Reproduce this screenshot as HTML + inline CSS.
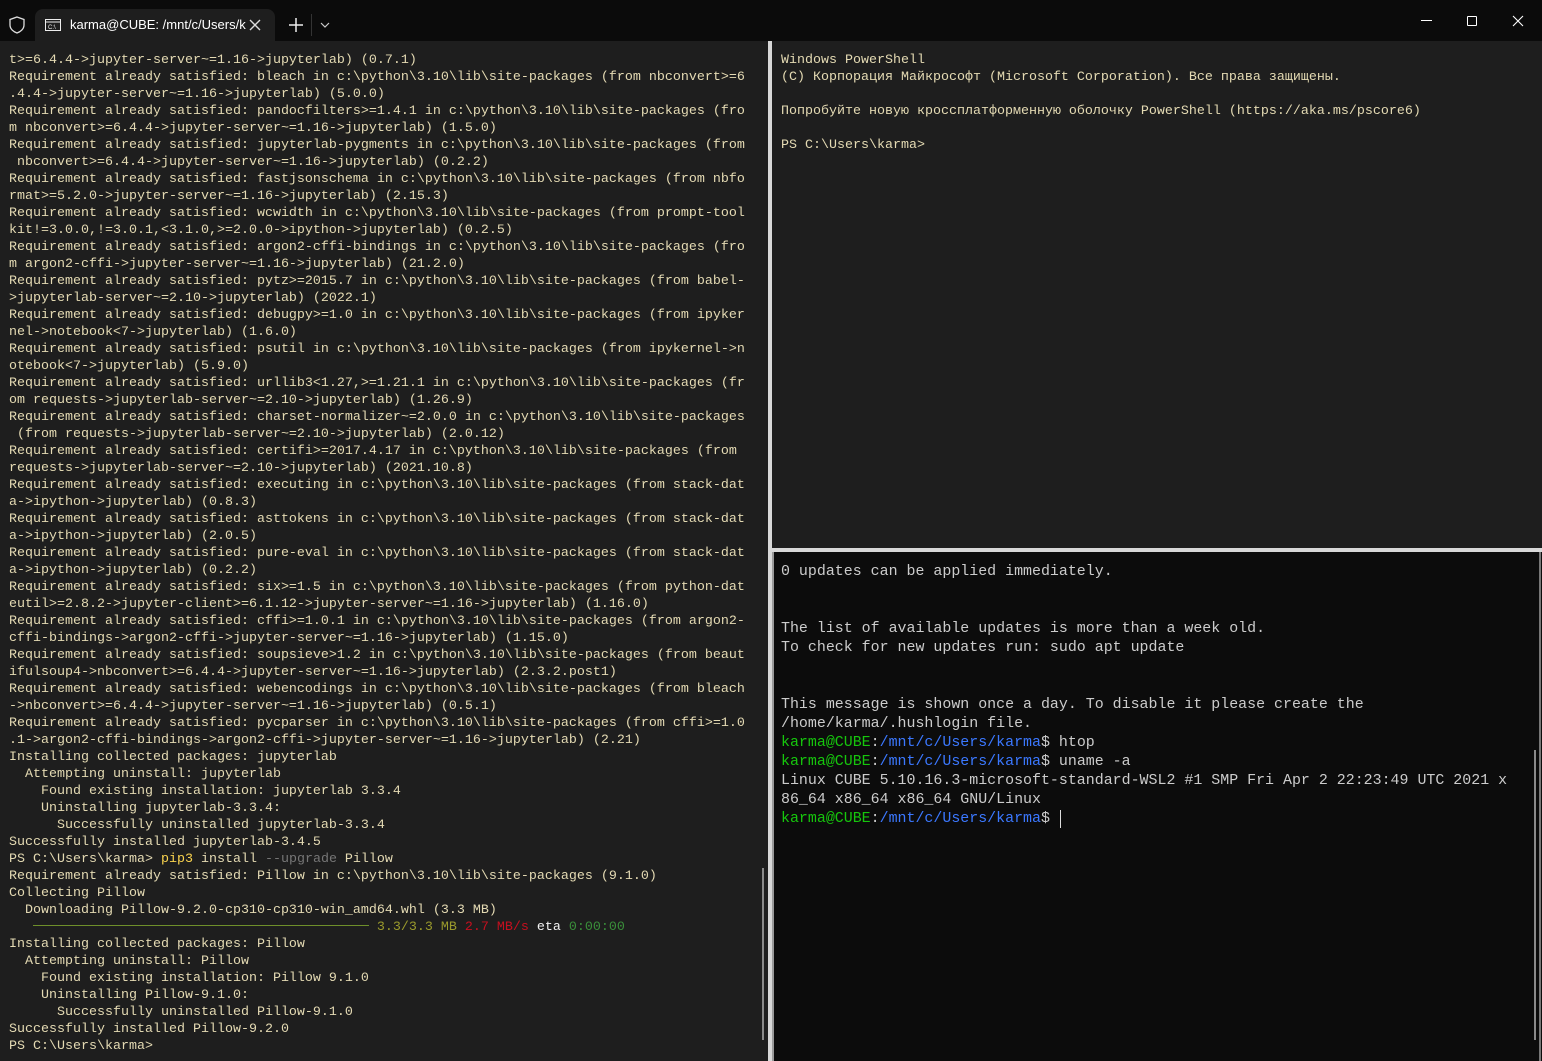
<!DOCTYPE html>
<html><head><meta charset="utf-8"><style>
*{margin:0;padding:0;box-sizing:border-box}
body{width:1542px;height:1061px;background:#0b0b0b;position:relative;overflow:hidden;font-family:"Liberation Mono","DejaVu Sans Mono",monospace}
.tb{position:absolute;left:0;top:0;width:1542px;height:41px;background:#0b0b0b}
.tab{position:absolute;left:35px;top:9px;width:240px;height:32px;background:#1e1e1e;border-radius:8px 8px 0 0}
.tab .t{position:absolute;left:35px;top:8px;font:13px "Liberation Sans",sans-serif;color:#fff}
pre{position:absolute;white-space:pre;font-family:"Liberation Mono",monospace}
.l{left:9px;top:51.5px;font-size:13.33px;line-height:17px;color:#e4dab3}
#left{position:absolute;left:0;top:41px;width:768px;height:1020px;background:#1e1e1e}
#rt{position:absolute;left:772px;top:41px;width:770px;height:507px;background:#1e1e1e}
#rb{position:absolute;left:772px;top:552px;width:770px;height:509px;background:#0c0c0c}
.div{position:absolute;background:#cfcfcf}
.rb{left:781px;top:562.5px;font-size:14.95px;line-height:19px;color:#cccccc}
.g{color:#16c60c}.b{color:#3b78ff}
.y{color:#f9d34e}.gr{color:#767676}.o{color:#9a9a2c}.r{color:#c50f1f}.gg{color:#3a8f3a}.w{color:#f2f2f2}
</style></head><body>
<div class="tb">
<svg style="position:absolute;left:9px;top:16px" width="16" height="18" viewBox="0 0 16 18"><path d="M8 1 L15 3.5 V9 C15 13 11.5 15.8 8 17 C4.5 15.8 1 13 1 9 V3.5 Z" fill="none" stroke="#ddd" stroke-width="1.3"/></svg>
<div class="tab">
<svg style="position:absolute;left:10px;top:10px" width="16" height="12" viewBox="0 0 16 12"><rect x="0.5" y="0.5" width="15" height="11" fill="none" stroke="#eee"/><line x1="0.5" y1="3" x2="15.5" y2="3" stroke="#eee"/><text x="3" y="10" font-size="6" fill="#eee" font-family="Liberation Sans">C:\</text></svg>
<div class="t">karma@CUBE: /mnt/c/Users/k</div>
<svg style="position:absolute;left:214px;top:10px" width="12" height="12"><path d="M1 1L11 11M11 1L1 11" stroke="#ddd" stroke-width="1.4"/></svg>
</div>
<svg style="position:absolute;left:289px;top:18px" width="14" height="14"><path d="M7 0V14M0 7H14" stroke="#eee" stroke-width="1.5"/></svg>
<div style="position:absolute;left:311px;top:14px;width:1px;height:22px;background:#333"></div>
<svg style="position:absolute;left:320px;top:22px" width="10" height="6"><path d="M1 1L5 5L9 1" stroke="#ccc" fill="none" stroke-width="1.2"/></svg>
<div style="position:absolute;left:1421px;top:20px;width:11px;height:1px;background:#fff"></div>
<div style="position:absolute;left:1467px;top:16px;width:10px;height:10px;border:1px solid #fff;border-radius:1px"></div>
<svg style="position:absolute;left:1512px;top:15px" width="12" height="12"><path d="M1 1L11 11M11 1L1 11" stroke="#fff" stroke-width="1.1"/></svg>
</div>
<div id="left"></div><div id="rt"></div><div id="rb"></div>
<div class="div" style="left:768px;top:41px;width:4px;height:1020px;background:#d8d8d8"></div>
<div class="div" style="left:772px;top:548px;width:770px;height:4px;background:#d8d8d8"></div>
<div class="div" style="left:772px;top:552px;width:2px;height:509px;background:#9a9a9a"></div>
<div class="div" style="left:1539px;top:552px;width:2px;height:509px;background:#777"></div>
<div class="div" style="left:762px;top:868px;width:2px;height:172px;background:#8a8a8a"></div>
<div class="div" style="left:1534px;top:750px;width:2px;height:290px;background:#8a8a8a"></div>
<div style="position:absolute;left:33px;top:925px;width:336px;height:1px;background:#6e8f2a"></div>
<pre class="l">t>=6.4.4->jupyter-server~=1.16->jupyterlab) (0.7.1)
Requirement already satisfied: bleach in c:\python\3.10\lib\site-packages (from nbconvert>=6
.4.4->jupyter-server~=1.16->jupyterlab) (5.0.0)
Requirement already satisfied: pandocfilters>=1.4.1 in c:\python\3.10\lib\site-packages (fro
m nbconvert>=6.4.4->jupyter-server~=1.16->jupyterlab) (1.5.0)
Requirement already satisfied: jupyterlab-pygments in c:\python\3.10\lib\site-packages (from
 nbconvert>=6.4.4->jupyter-server~=1.16->jupyterlab) (0.2.2)
Requirement already satisfied: fastjsonschema in c:\python\3.10\lib\site-packages (from nbfo
rmat>=5.2.0->jupyter-server~=1.16->jupyterlab) (2.15.3)
Requirement already satisfied: wcwidth in c:\python\3.10\lib\site-packages (from prompt-tool
kit!=3.0.0,!=3.0.1,<3.1.0,>=2.0.0->ipython->jupyterlab) (0.2.5)
Requirement already satisfied: argon2-cffi-bindings in c:\python\3.10\lib\site-packages (fro
m argon2-cffi->jupyter-server~=1.16->jupyterlab) (21.2.0)
Requirement already satisfied: pytz>=2015.7 in c:\python\3.10\lib\site-packages (from babel-
>jupyterlab-server~=2.10->jupyterlab) (2022.1)
Requirement already satisfied: debugpy>=1.0 in c:\python\3.10\lib\site-packages (from ipyker
nel->notebook<7->jupyterlab) (1.6.0)
Requirement already satisfied: psutil in c:\python\3.10\lib\site-packages (from ipykernel->n
otebook<7->jupyterlab) (5.9.0)
Requirement already satisfied: urllib3<1.27,>=1.21.1 in c:\python\3.10\lib\site-packages (fr
om requests->jupyterlab-server~=2.10->jupyterlab) (1.26.9)
Requirement already satisfied: charset-normalizer~=2.0.0 in c:\python\3.10\lib\site-packages
 (from requests->jupyterlab-server~=2.10->jupyterlab) (2.0.12)
Requirement already satisfied: certifi>=2017.4.17 in c:\python\3.10\lib\site-packages (from
requests->jupyterlab-server~=2.10->jupyterlab) (2021.10.8)
Requirement already satisfied: executing in c:\python\3.10\lib\site-packages (from stack-dat
a->ipython->jupyterlab) (0.8.3)
Requirement already satisfied: asttokens in c:\python\3.10\lib\site-packages (from stack-dat
a->ipython->jupyterlab) (2.0.5)
Requirement already satisfied: pure-eval in c:\python\3.10\lib\site-packages (from stack-dat
a->ipython->jupyterlab) (0.2.2)
Requirement already satisfied: six>=1.5 in c:\python\3.10\lib\site-packages (from python-dat
eutil>=2.8.2->jupyter-client>=6.1.12->jupyter-server~=1.16->jupyterlab) (1.16.0)
Requirement already satisfied: cffi>=1.0.1 in c:\python\3.10\lib\site-packages (from argon2-
cffi-bindings->argon2-cffi->jupyter-server~=1.16->jupyterlab) (1.15.0)
Requirement already satisfied: soupsieve>1.2 in c:\python\3.10\lib\site-packages (from beaut
ifulsoup4->nbconvert>=6.4.4->jupyter-server~=1.16->jupyterlab) (2.3.2.post1)
Requirement already satisfied: webencodings in c:\python\3.10\lib\site-packages (from bleach
->nbconvert>=6.4.4->jupyter-server~=1.16->jupyterlab) (0.5.1)
Requirement already satisfied: pycparser in c:\python\3.10\lib\site-packages (from cffi>=1.0
.1->argon2-cffi-bindings->argon2-cffi->jupyter-server~=1.16->jupyterlab) (2.21)
Installing collected packages: jupyterlab
  Attempting uninstall: jupyterlab
    Found existing installation: jupyterlab 3.3.4
    Uninstalling jupyterlab-3.3.4:
      Successfully uninstalled jupyterlab-3.3.4
Successfully installed jupyterlab-3.4.5
PS C:\Users\karma> <span class="y">pip3</span> install <span class="gr">--upgrade</span> Pillow
Requirement already satisfied: Pillow in c:\python\3.10\lib\site-packages (9.1.0)
Collecting Pillow
  Downloading Pillow-9.2.0-cp310-cp310-win_amd64.whl (3.3 MB)
                                              <span class="o">3.3/3.3 MB</span> <span class="r">2.7 MB/s</span> <span class="w">eta</span> <span class="gg">0:00:00</span>
Installing collected packages: Pillow
  Attempting uninstall: Pillow
    Found existing installation: Pillow 9.1.0
    Uninstalling Pillow-9.1.0:
      Successfully uninstalled Pillow-9.1.0
Successfully installed Pillow-9.2.0
PS C:\Users\karma></pre>
<pre class="l" style="left:781px">Windows PowerShell
(C) Корпорация Майкрософт (Microsoft Corporation). Все права защищены.

Попробуйте новую кроссплатформенную оболочку PowerShell (https://aka.ms/pscore6)

PS C:\Users\karma></pre>
<pre class="rb">0 updates can be applied immediately.


The list of available updates is more than a week old.
To check for new updates run: sudo apt update


This message is shown once a day. To disable it please create the
/home/karma/.hushlogin file.
<span class="g">karma@CUBE</span>:<span class="b">/mnt/c/Users/karma</span>$ htop
<span class="g">karma@CUBE</span>:<span class="b">/mnt/c/Users/karma</span>$ uname -a
Linux CUBE 5.10.16.3-microsoft-standard-WSL2 #1 SMP Fri Apr 2 22:23:49 UTC 2021 x
86_64 x86_64 x86_64 GNU/Linux
<span class="g">karma@CUBE</span>:<span class="b">/mnt/c/Users/karma</span>$ </pre>
<div style="position:absolute;left:1060px;top:810px;width:1px;height:18px;background:#ddd"></div>
</body></html>
